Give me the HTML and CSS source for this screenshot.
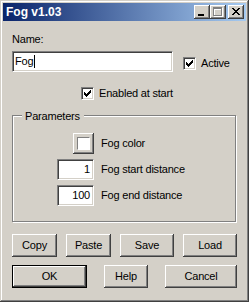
FILE: index.html
```html
<!DOCTYPE html>
<html lang="en">
<head>
    <meta charset="UTF-8">
    <title>Fog v1.03</title>
    <link rel="stylesheet" href="styles.css">
</head>
<body>

<div class="window">
    <div class="titlebar">
        <span class="title">Fog v1.03</span>
        <div class="caption-buttons">
            <span class="cap-btn">
                <svg width="16" height="14" shape-rendering="crispEdges"><rect x="4" y="9" width="6" height="2" fill="#000"/></svg>
            </span>
            <span class="cap-btn">
                <!-- disabled maximize: white copy under the grey one -->
                <svg width="16" height="14" shape-rendering="crispEdges">
                    <g fill="#fff" transform="translate(1,1)">
                        <rect x="3" y="2" width="9" height="2"/><rect x="3" y="2" width="1" height="9"/>
                        <rect x="11" y="2" width="1" height="9"/><rect x="3" y="10" width="9" height="1"/>
                    </g>
                    <g fill="#808080">
                        <rect x="3" y="2" width="9" height="2"/><rect x="3" y="2" width="1" height="9"/>
                        <rect x="11" y="2" width="1" height="9"/><rect x="3" y="10" width="9" height="1"/>
                    </g>
                </svg>
            </span>
            <span class="cap-btn close">
                <svg width="16" height="14" shape-rendering="crispEdges">
                    <g fill="#000" transform="translate(4,3)">
                        <rect x="0" y="0" width="2" height="1"/><rect x="6" y="0" width="2" height="1"/>
                        <rect x="1" y="1" width="2" height="1"/><rect x="5" y="1" width="2" height="1"/>
                        <rect x="2" y="2" width="4" height="1"/>
                        <rect x="3" y="3" width="2" height="1"/>
                        <rect x="2" y="4" width="4" height="1"/>
                        <rect x="1" y="5" width="2" height="1"/><rect x="5" y="5" width="2" height="1"/>
                        <rect x="0" y="6" width="2" height="1"/><rect x="6" y="6" width="2" height="1"/>
                    </g>
                </svg>
            </span>
        </div>
    </div>

    <div class="content">
        <div class="name-label">Name:</div>
        <div class="name-row">
            <div class="edit name-edit">Fog<span class="caret"></span></div>
            <label class="check">
                <span class="box">
                    <svg width="11" height="11" shape-rendering="crispEdges">
                        <g fill="#000" transform="translate(2,2)">
                            <rect x="0" y="2" width="1" height="3"/><rect x="1" y="3" width="1" height="3"/>
                            <rect x="2" y="4" width="1" height="3"/><rect x="3" y="3" width="1" height="3"/>
                            <rect x="4" y="2" width="1" height="3"/><rect x="5" y="1" width="1" height="3"/>
                            <rect x="6" y="0" width="1" height="3"/>
                        </g>
                    </svg>
                </span>
                Active
            </label>
        </div>

        <div class="enabled-row">
            <label class="check">
                <span class="box">
                    <svg width="11" height="11" shape-rendering="crispEdges">
                        <g fill="#000" transform="translate(2,2)">
                            <rect x="0" y="2" width="1" height="3"/><rect x="1" y="3" width="1" height="3"/>
                            <rect x="2" y="4" width="1" height="3"/><rect x="3" y="3" width="1" height="3"/>
                            <rect x="4" y="2" width="1" height="3"/><rect x="5" y="1" width="1" height="3"/>
                            <rect x="6" y="0" width="1" height="3"/>
                        </g>
                    </svg>
                </span>
                Enabled at start
            </label>
        </div>

        <div class="group">
            <span class="group-title">Parameters</span>
            <div class="param-grid">
                <span class="btn color-btn"><span class="swatch"></span></span>
                <span>Fog color</span>
                <div class="edit num">1</div>
                <span>Fog start distance</span>
                <div class="edit num">100</div>
                <span>Fog end distance</span>
            </div>
        </div>

        <div class="btn-row">
            <span class="btn small">Copy</span>
            <span class="btn small">Paste</span>
            <span class="btn wide">Save</span>
            <span class="btn wide">Load</span>
        </div>
        <div class="btn-row bottom">
            <span class="btn default ok">OK</span>
            <span class="btn help">Help</span>
            <span class="btn cancel">Cancel</span>
        </div>
    </div>
</div>

</body>
</html>
```

FILE: styles.css
```css
body {
    margin: 0;
    font-family: "Liberation Sans", Arial, sans-serif;
    font-size: 11px;
    line-height: 13px;
    letter-spacing: -0.2px;
    color: #000;
}
.window {
    width: 249px;
    height: 302px;
    box-sizing: border-box;
    padding: 3px;
    background-color: #d4d0c8;
    box-shadow: inset -1px -1px #404040, inset 1px 1px #d4d0c8, inset -2px -2px #808080, inset 2px 2px #fff;
}
.titlebar {
    height: 18px;
    display: flex;
    align-items: center;
    padding: 0 2px 0 3px;
    background: linear-gradient(to right, #0a246a, #a6caf0);
}
.title {
    flex: 1;
    color: white;
    font-weight: bold;
    font-size: 12px;
    letter-spacing: 0;
}
.caption-buttons {
    display: flex;
}
.cap-btn {
    display: block;
    width: 16px;
    height: 14px;
    background-color: #d4d0c8;
    box-shadow: inset -1px -1px #404040, inset 1px 1px #fff, inset -2px -2px #808080, inset 2px 2px #d4d0c8;
}
.cap-btn svg {
    display: block;
}
.cap-btn.close {
    margin-left: 2px;
}
.content {
    padding: 0 9px;
}
.name-label {
    margin-top: 12px;
}
.name-row {
    display: flex;
    align-items: flex-start;
    margin-top: 5px;
}
.edit {
    box-sizing: border-box;
    height: 21px;
    background-color: white;
    border: 1px solid;
    border-color: #808080 #fff #fff #808080;
    box-shadow: inset 1px 1px #404040, inset -1px -1px #d4d0c8;
    display: flex;
    align-items: center;
}
.name-edit {
    width: 161px;
    padding-left: 2px;
}
.caret {
    width: 1px;
    height: 13px;
    margin-left: 1px;
    background-color: black;
}
.check {
    display: flex;
    align-items: center;
    gap: 5px;
}
.name-row .check {
    margin: 6px 0 0 10px;
}
.box {
    box-sizing: border-box;
    width: 13px;
    height: 13px;
    background-color: white;
    border: 1px solid;
    border-color: #808080 #fff #fff #808080;
    box-shadow: inset 1px 1px #404040, inset -1px -1px #d4d0c8;
}
.box svg {
    display: block;
}
.enabled-row {
    margin-top: 15px;
    padding-left: 69px;
}
.group {
    position: relative;
    width: 224px;
    box-sizing: border-box;
    margin-top: 15px;
    padding: 17px 0 15px 0;
    border: 1px solid #808080;
    box-shadow: 1px 1px 0 #fff, inset 1px 1px 0 #fff;
}
.group-title {
    position: absolute;
    top: -6px;
    left: 9px;
    padding: 0 4px 0 3px;
    background-color: #d4d0c8;
}
.param-grid {
    display: grid;
    grid-template-columns: 81px auto;
    grid-auto-rows: 21px;
    column-gap: 7px;
    row-gap: 5px;
    align-items: center;
}
.param-grid > .btn,
.param-grid > .edit {
    justify-self: end;
}
.btn {
    box-sizing: border-box;
    height: 23px;
    display: flex;
    align-items: center;
    justify-content: center;
    background-color: #d4d0c8;
    box-shadow: inset -1px -1px #404040, inset 1px 1px #fff, inset -2px -2px #808080, inset 2px 2px #d4d0c8;
}
.color-btn {
    width: 21px;
    height: 21px;
}
.swatch {
    box-sizing: border-box;
    width: 13px;
    height: 13px;
    background-color: white;
    border: 1px solid;
    border-color: #808080 #fff #fff #808080;
}
.num {
    width: 37px;
    justify-content: flex-end;
    padding-right: 3px;
}
.btn-row {
    display: flex;
    gap: 9px;
    margin-top: 12px;
}
.small {
    width: 45px;
}
.wide {
    width: 54px;
}
.btn-row.bottom {
    gap: 0;
    justify-content: space-between;
    margin-top: 8px;
}
.ok {
    width: 75px;
}
.help {
    width: 44px;
}
.cancel {
    width: 72px;
}
.btn.default {
    border: 1px solid black;
}
```
